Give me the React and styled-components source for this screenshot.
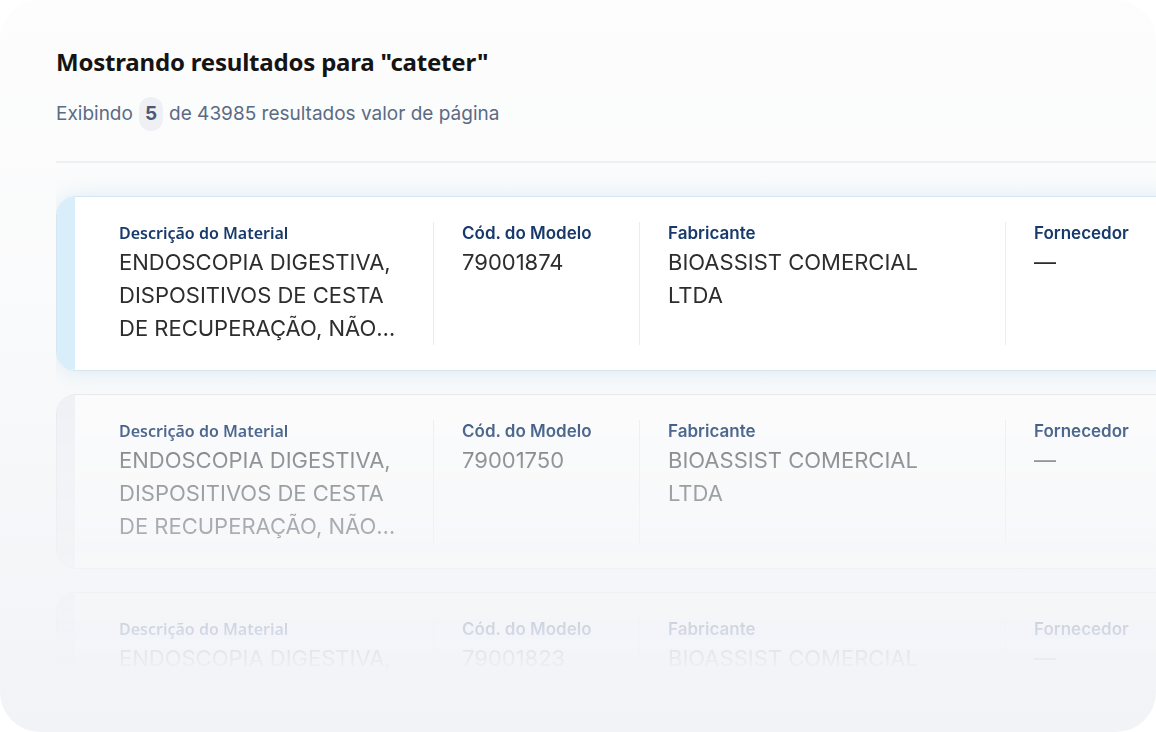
import React from 'react';
import styled, { createGlobalStyle } from 'styled-components';

const GlobalStyle = createGlobalStyle`
  html, body {
    margin: 0;
    padding: 0;
    background: #ffffff;
  }
  * { box-sizing: border-box; }
`;

const Panel = styled.main`
  width: 1156px;
  height: 732px;
  border-radius: 40px;
  overflow: hidden;
  background: linear-gradient(180deg, #fdfdfd 0%, #f9fafb 45%, #f1f3f7 100%);
  padding: 46px 0 0 56px;
  font-family: Inter, "Noto Sans", sans-serif;
`;

const Title = styled.h1`
  margin: 0;
  font-family: "Noto Sans", "Open Sans", sans-serif;
  font-weight: 700;
  font-size: 24px;
  line-height: 32px;
  color: #141414;
  letter-spacing: -0.2px;
`;

const Summary = styled.p`
  margin: 19px 0 0;
  height: 34px;
  font-size: 19px;
  line-height: 28px;
  color: #5b6b84;
  display: flex;
  align-items: center;
  gap: 6px;
`;

const Count = styled.span`
  display: inline-flex;
  align-items: center;
  justify-content: center;
  height: 34px;
  padding: 0 6px;
  border-radius: 12px;
  background: #eef0f4;
  font-weight: 700;
  color: #4b5a72;
`;

const Divider = styled.hr`
  margin: 30px 0 0;
  border: 0;
  height: 2px;
  background: #eef0f3;
`;

const fade = `linear-gradient(180deg,
    #000 0px, #000 222px, rgba(0,0,0,0.76) 269px, rgba(0,0,0,0.58) 300px,
    rgba(0,0,0,0.44) 366px, rgba(0,0,0,0.15) 468px, rgba(0,0,0,0.05) 498px,
    rgba(0,0,0,0) 510px)`;

const List = styled.section`
  display: flex;
  flex-direction: column;
  gap: 23px;
  padding-top: 33px;
  width: 1240px;
  -webkit-mask-image: ${fade};
  mask-image: ${fade};
`;

const Card = styled.article`
  display: flex;
  border-radius: 20px;
  overflow: hidden;
  border: 1px solid ${p => (p.$active ? '#d6e6f1' : '#e5e8ed')};
  background: ${p => (p.$active ? '#ffffff' : '#fbfbfc')};
  box-shadow: ${p => (p.$active ? '0 0 22px rgba(120, 190, 235, 0.24)' : 'none')};
`;

const Accent = styled.div`
  width: 18px;
  flex: none;
  background: ${p => (p.$active ? '#d8eefa' : '#eef0f4')};
`;

const Fields = styled.div`
  display: grid;
  grid-template-columns: 314px 206px 366px 280px;
  padding: 25px 0 25px 44px;
`;

const Field = styled.div`
  padding: 0 ${p => p.$padRight || 28}px 0 ${p => (p.$first ? 0 : 28)}px;
  border-left: ${p => (p.$first ? 'none' : '1px solid #ececef')};
  min-height: 123px;
`;

const Label = styled.div`
  font-family: ${p => (p.$alt ? '"Noto Sans", "Open Sans", sans-serif' : 'Inter, sans-serif')};
  font-size: ${p => (p.$alt ? 16 : 17)}px;
  line-height: 22px;
  font-weight: 600;
  color: #173a6b;
`;

const Value = styled.div`
  margin-top: 2px;
  font-size: 22px;
  line-height: 33px;
  color: ${p => (p.$active ? '#2d2d2d' : '#4a4f55')};
  display: -webkit-box;
  -webkit-line-clamp: 3;
  -webkit-box-orient: vertical;
  overflow: hidden;
`;

const rows = [
  { code: '79001874', active: true },
  { code: '79001750', active: false },
  { code: '79001823', active: false },
];

const desc =
  'ENDOSCOPIA DIGESTIVA, DISPOSITIVOS DE CESTA DE RECUPERAÇÃO, NÃO ABSORVÍVEL, ESTÉRIL';

export default function App() {
  return (
    <>
      <GlobalStyle />
      <Panel>
        <Title>Mostrando resultados para "cateter"</Title>
        <Summary>
          Exibindo <Count>5</Count> de 43985 resultados valor de página
        </Summary>
        <Divider />
        <List>
          {rows.map(r => (
            <Card key={r.code} $active={r.active}>
              <Accent $active={r.active} />
              <Fields>
                <Field $first>
                  <Label $alt>Descrição do Material</Label>
                  <Value $active={r.active}>{desc}</Value>
                </Field>
                <Field>
                  <Label>Cód. do Modelo</Label>
                  <Value $active={r.active}>{r.code}</Value>
                </Field>
                <Field $padRight={60}>
                  <Label>Fabricante</Label>
                  <Value $active={r.active}>BIOASSIST COMERCIAL LTDA</Value>
                </Field>
                <Field>
                  <Label>Fornecedor</Label>
                  <Value $active={r.active}>—</Value>
                </Field>
              </Fields>
            </Card>
          ))}
        </List>
      </Panel>
    </>
  );
}
